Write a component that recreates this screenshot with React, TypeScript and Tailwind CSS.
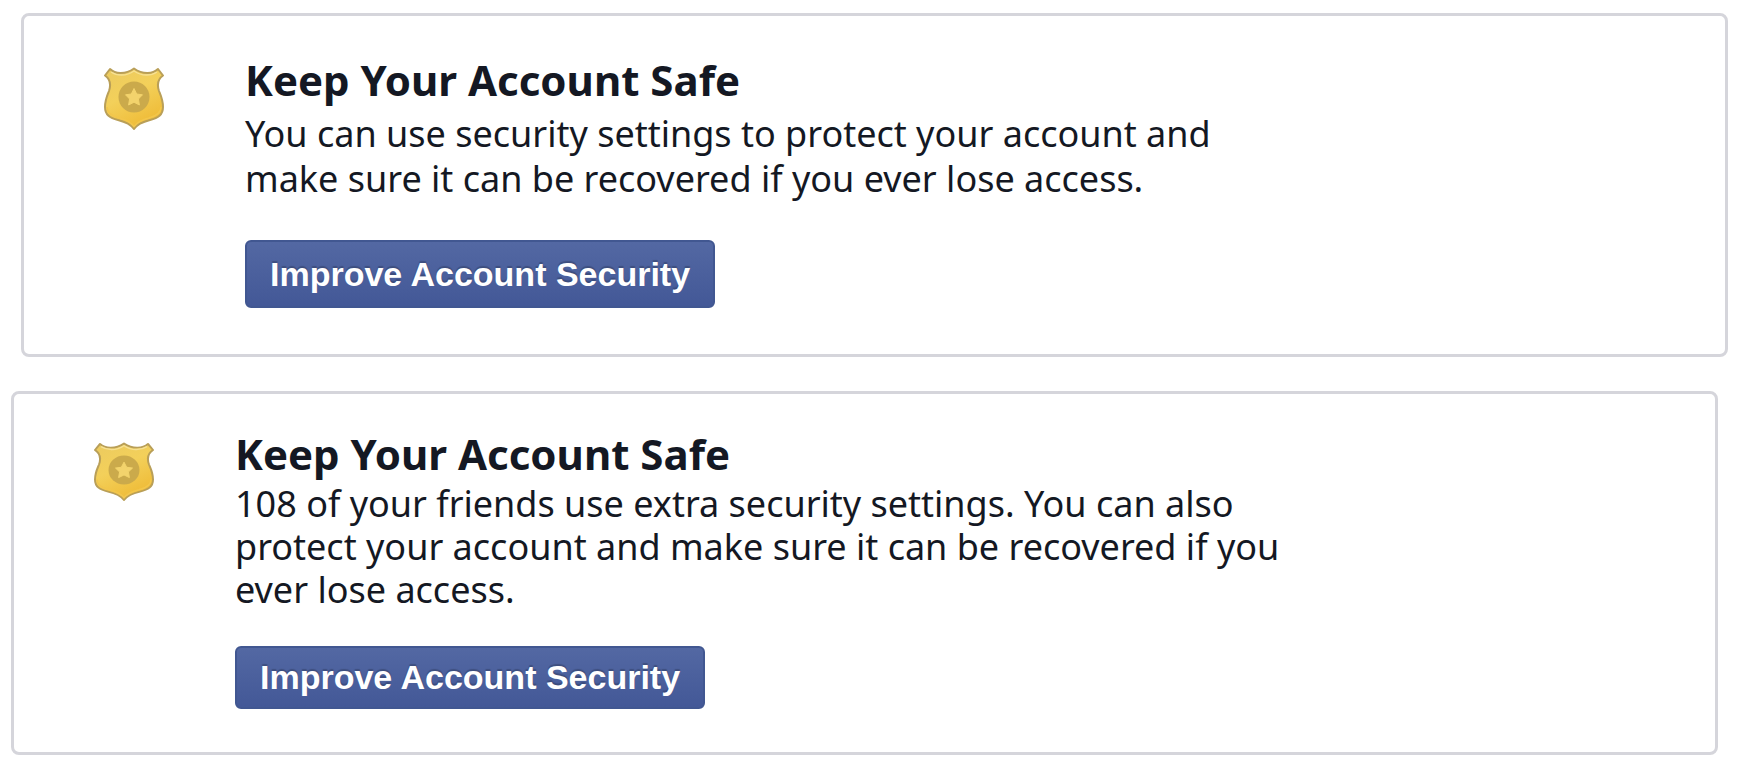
import React from 'react';
import clsx from 'clsx';

interface SafetyCardProps {
    id: string;
    message: string;
    className?: string;
    textClassName: string;
    buttonClassName: string;
    badgeClassName: string;
}

const ShieldBadge: React.FC<{ id: string; className?: string }> = ({ id, className }) => (
    <svg
        viewBox="0 0 60 63"
        preserveAspectRatio="none"
        className={clsx('w-[60px] shrink-0', className)}
        aria-hidden="true"
    >
        <defs>
            <linearGradient id={id} x1="0" y1="0" x2="0.5" y2="1">
                <stop offset="0" stopColor="#ebca60" />
                <stop offset="0.5" stopColor="#f3d05a" />
                <stop offset="1" stopColor="#efbc38" />
            </linearGradient>
        </defs>
        <path
            d="M6 2C11 7 21 8 30 1.500C39 8 49 7 54 2L59 8.500C54 12 53 18 55 24C57 29 59 33 59 40C59 48 54 51 46 53C38 55 33 57.500 30 62C27 57.500 22 55 14 53C6 51 1 48 1 40C1 33 3 29 5 24C7 18 6 12 1 8.500Z"
            fill={`url(#${id})`}
            stroke="#b99f58"
            strokeWidth="2"
            strokeLinejoin="round"
        />
        <path
            d="M7 5C13 9 22 9.500 30 4C38 9.500 47 9 53 5"
            fill="none"
            stroke="#f6e092"
            strokeWidth="1.500"
        />
        <path
            d="M3 40C3 46 8 49 15 51C23 53 27 55.500 30 59.500C33 55.500 37 53 45 51C52 49 57 46 57 40"
            fill="none"
            stroke="#f2c64c"
            strokeWidth="1.500"
        />
        <circle cx="30" cy="30" r="15.500" fill="#cbaa4b" />
        <path
            d="M30 21.500L32.700 27L38.500 27.800L34.400 32L35.400 38L30 35.200L24.600 38L25.600 32L21.500 27.800L27.300 27Z"
            fill="#f3d36c"
            stroke="#f3d36c"
            strokeLinejoin="round"
        />
    </svg>
);

const SafetyCard: React.FC<SafetyCardProps> = ({
    id,
    message,
    className,
    textClassName,
    buttonClassName,
    badgeClassName,
}) => (
    <section
        className={clsx('flex items-start rounded-lg border-3 border-[#d5d5db] bg-white pl-20', className)}
    >
        <ShieldBadge id={id} className={badgeClassName} />
        <div className="ml-[81px] flex flex-col items-start">
            <h2 className="font-['Noto_Sans','Open_Sans',sans-serif] text-[42px] leading-[52px] font-bold text-[#141823]">
                Keep Your Account Safe
            </h2>
            <p className={clsx("font-['Noto_Sans','Open_Sans',sans-serif] text-4xl text-[#141823]", textClassName)}>
                {message}
            </p>
            <button
                type="button"
                className={clsx(
                    "rounded-md border-2 border-[#415791] bg-linear-to-b from-[#5368a3] to-[#435897] px-[23px] font-['Liberation_Sans',Arial,sans-serif] text-[34px] font-bold text-white text-shadow-[0_-2px_1px_rgba(0,0,0,0.2)]",
                    buttonClassName,
                )}
            >
                Improve Account Security
            </button>
        </div>
    </section>
);

const App: React.FC = () => (
    <main className="flex flex-col gap-[34px] bg-white px-[11px] py-[13px]">
        <SafetyCard
            id="shield-top"
            message="You can use security settings to protect your account and make sure it can be recovered if you ever lose access."
            className="ml-[10px] mr-[9px] pt-[38px] pb-[46px]"
            textClassName="mt-[5px] max-w-[1020px] leading-[45px]"
            buttonClassName="mt-[39px] h-[68px]"
            badgeClassName="mt-[13px] h-[63px]"
        />
        <SafetyCard
            id="shield-bottom"
            message="108 of your friends use extra security settings. You can also protect your account and make sure it can be recovered if you ever lose access."
            className="mr-[19px] pt-[34px] pb-[43px]"
            textClassName="mt-[2px] max-w-[1080px] leading-[43px]"
            buttonClassName="mt-[35px] h-[63px]"
            badgeClassName="mt-[14px] h-[59px]"
        />
    </main>
);

export default App;
